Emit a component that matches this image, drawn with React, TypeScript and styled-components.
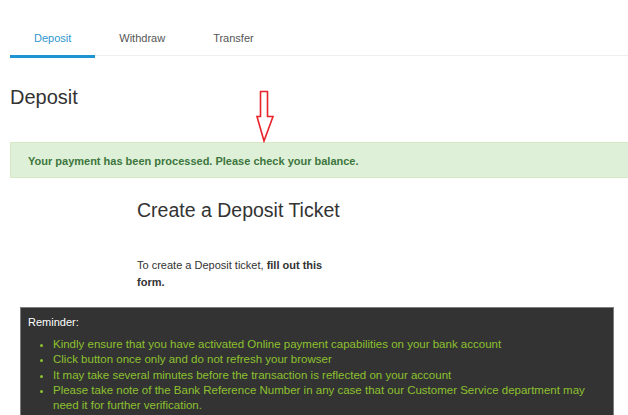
import { FC } from 'react';
import styled, { createGlobalStyle } from 'styled-components';

const GlobalStyle = createGlobalStyle`
	html, body {
		margin: 0;
		padding: 0;
		overflow: hidden;
		background: #fff;
	}
	body {
		font-family: 'Liberation Sans', Arial, sans-serif;
		color: #333;
	}
`;

const tabs = ['Deposit', 'Withdraw', 'Transfer'];

const reminders = [
	'Kindly ensure that you have activated Online payment capabilities on your bank account',
	'Click button once only and do not refresh your browser',
	'It may take several minutes before the transaction is reflected on your account',
	'Please take note of the Bank Reference Number in any case that our Customer Service department may need it for further verification.',
];

const DownArrow: FC = () => (
	<ArrowMark width="19" height="53" viewBox="0 0 19 53">
		<path
			d="M4.5 1.5 H11.5 V26.5 H17 L8 51 L1 26.5 H4.5 Z"
			fill="none"
			stroke="#e8232a"
			strokeWidth="1.6"
			strokeLinejoin="miter"
		/>
	</ArrowMark>
);

const App: FC = () => {
	return (
		<Page>
			<GlobalStyle />
			<TabBar>
				{tabs.map((t, i) => (
					<Tab key={t} active={i === 0}>
						{t}
					</Tab>
				))}
			</TabBar>
			<PageTitle>Deposit</PageTitle>
			<DownArrow />
			<SuccessAlert>Your payment has been processed. Please check your balance.</SuccessAlert>
			<TicketSection>
				<TicketTitle>Create a Deposit Ticket</TicketTitle>
				<TicketText>
					To create a Deposit ticket, <b>fill out this form.</b>
				</TicketText>
			</TicketSection>
			<ReminderBox>
				<ReminderLabel>Reminder:</ReminderLabel>
				<ReminderList>
					{reminders.map((r) => (
						<li key={r}>{r}</li>
					))}
				</ReminderList>
			</ReminderBox>
		</Page>
	);
};

export default App;

const Page = styled.div`
	position: relative;
	padding: 22px 0 0 10px;
	height: 415px;
	box-sizing: border-box;
`;

const TabBar = styled.div`
	display: flex;
	border-bottom: 1px solid #eeeeee;
	height: 33px;
`;

const Tab = styled.div<{ active?: boolean }>`
	padding: 8px 24px 0;
	height: 25px;
	font-size: 11px;
	line-height: 16px;
	color: ${(p) => (p.active ? '#2f97d0' : '#555')};
	border-bottom: 3px solid ${(p) => (p.active ? '#1e95d3' : 'transparent')};
	margin-bottom: -1px;
`;

const PageTitle = styled.h2`
	margin: 29px 0 0;
	font-size: 20px;
	line-height: 24px;
	font-weight: normal;
	color: #333;
`;

const ArrowMark = styled.svg`
	position: absolute;
	left: 256px;
	top: 90px;
`;

const SuccessAlert = styled.div`
	margin-top: 33px;
	height: 36px;
	box-sizing: border-box;
	padding: 10px 17px;
	background: #dff0d8;
	border: 1px solid #d6e9c6;
	border-right: none;
	color: #3c763d;
	font-size: 11px;
	line-height: 16px;
	font-weight: bold;
`;

const TicketSection = styled.div`
	padding-left: 127px;
	margin-top: 20px;
`;

const TicketTitle = styled.h3`
	margin: 0;
	font-size: 19.5px;
	line-height: 24px;
	font-weight: normal;
	color: #333;
`;

const TicketText = styled.p`
	margin: 35px 0 0;
	max-width: 195px;
	font-size: 11px;
	line-height: 17px;
	color: #333;

	b {
		font-weight: bold;
	}
`;

const ReminderBox = styled.div`
	margin: 16px 14px 0 10px;
	background: #333;
	border: 1px solid #7d7d7d;
	padding: 7px 7px 12px;
	font-size: 11.5px;
	line-height: 15.2px;
`;

const ReminderLabel = styled.div`
	color: #fff;
	font-size: 11px;
`;

const ReminderList = styled.ul`
	margin: 7px 0 0;
	padding-left: 25px;
	color: #8dc12f;
`;
